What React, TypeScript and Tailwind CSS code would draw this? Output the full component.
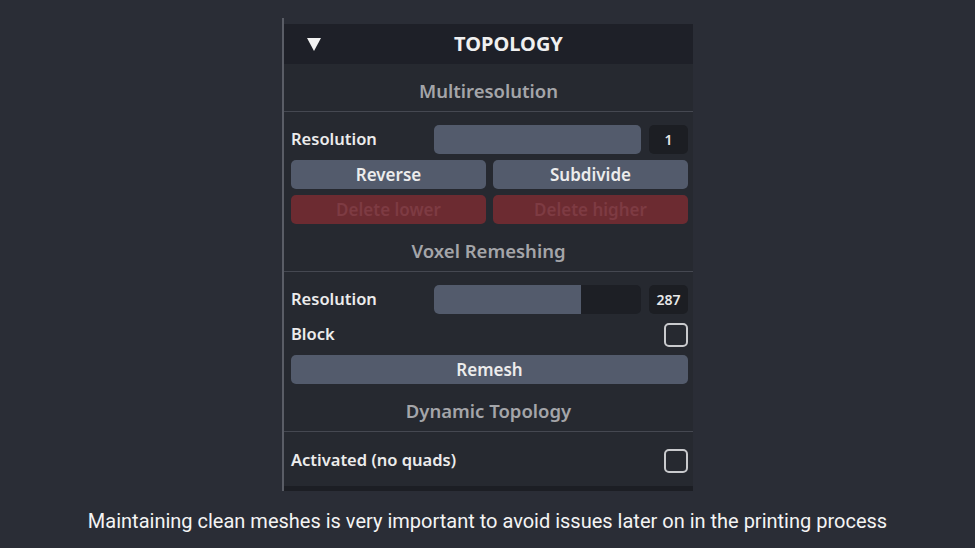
import React from "react";

const SectionTitle = ({ title }: { title: string }) => (
  <div className="flex h-[48px] items-center justify-center border-b border-[#454851] pt-[6px] text-[18.5px] font-semibold text-[#a4a5a9]">
    {title}
  </div>
);

const Slider = ({ value, fill }: { value: string; fill: number }) => (
  <div className="flex flex-1 items-center gap-2">
    <div className="relative h-[29px] flex-1 overflow-hidden rounded-[5px] bg-[#1d1f25]">
      <div className="h-full bg-[#535b6c]" style={{ width: `${fill}%` }} />
    </div>
    <div className="flex h-[29px] w-[39px] items-center justify-center rounded-[5px] bg-[#1c1e23] text-[14px] font-semibold text-[#e8e8e8]">
      {value}
    </div>
  </div>
);

const Checkbox = () => (
  <div className="h-[24px] w-[24px] rounded-[5px] border-2 border-[#c9cacd]" />
);

export default function App() {
  return (
    <div
      className="flex h-[548px] w-[975px] flex-col bg-[#2a2d36]"
      style={{ fontFamily: '"Noto Sans", "Open Sans", sans-serif' }}
    >
      <div className="ml-[282px] mt-[18px] w-[411px] border-l-2 border-[#5a5d66] pt-[6px]">
        <div className="bg-[#262930]">
          <div className="relative flex h-[40px] items-center justify-center bg-[#1e2028]">
            <svg className="absolute left-[23px] top-[14px]" width="14" height="13" viewBox="0 0 14 13">
              <path d="M0 0 H14 L7 13 Z" fill="#f2f2f2" />
            </svg>
            <span className="ml-[40px] text-[20px] font-bold text-[#f0f0f0]">TOPOLOGY</span>
          </div>

          <SectionTitle title="Multiresolution" />
          <div className="flex flex-col gap-[6px] pl-[7px] pr-[5px] pt-[13px]">
            <div className="flex items-center">
              <span className="w-[143px] text-[16.5px] font-semibold text-[#ececec]">Resolution</span>
              <Slider value="1" fill={100} />
            </div>
            <div className="grid grid-cols-2 gap-[7px]">
              <button className="h-[29px] rounded-[5px] bg-[#535b6c] text-[17px] font-semibold text-[#ececec]">Reverse</button>
              <button className="h-[29px] rounded-[5px] bg-[#535b6c] text-[17px] font-semibold text-[#ececec]">Subdivide</button>
            </div>
            <div className="grid grid-cols-2 gap-[7px]">
              <button className="h-[29px] rounded-[5px] bg-[#6c2b31] text-[17px] font-semibold text-[#7e3b43]">Delete lower</button>
              <button className="h-[29px] rounded-[5px] bg-[#6c2b31] text-[17px] font-semibold text-[#7e3b43]">Delete higher</button>
            </div>
          </div>

          <SectionTitle title="Voxel Remeshing" />
          <div className="flex flex-col gap-[6px] pl-[7px] pr-[5px] pt-[13px]">
            <div className="flex items-center">
              <span className="w-[143px] text-[16.5px] font-semibold text-[#ececec]">Resolution</span>
              <Slider value="287" fill={71} />
            </div>
            <div className="flex h-[29px] items-center justify-between">
              <span className="text-[16.5px] font-semibold text-[#ececec]">Block</span>
              <Checkbox />
            </div>
            <button className="h-[29px] rounded-[5px] bg-[#535b6c] text-[17px] font-semibold text-[#ececec]">Remesh</button>
          </div>

          <SectionTitle title="Dynamic Topology" />
          <div className="flex flex-col pb-[11px] pl-[7px] pr-[5px] pt-[14px]">
            <div className="flex h-[29px] items-center justify-between">
              <span className="text-[16.5px] font-semibold text-[#ececec]">Activated (no quads)</span>
              <Checkbox />
            </div>
          </div>
          <div className="h-[5px] bg-[#1c1e24]" />
        </div>
      </div>

      <div
        className="mt-[15px] text-center text-[20px] text-[#f4f4f4]"
        style={{ fontFamily: 'Roboto, "Liberation Sans", sans-serif' }}
      >
        Maintaining clean meshes is very important to avoid issues later on in the printing process
      </div>
    </div>
  );
}
